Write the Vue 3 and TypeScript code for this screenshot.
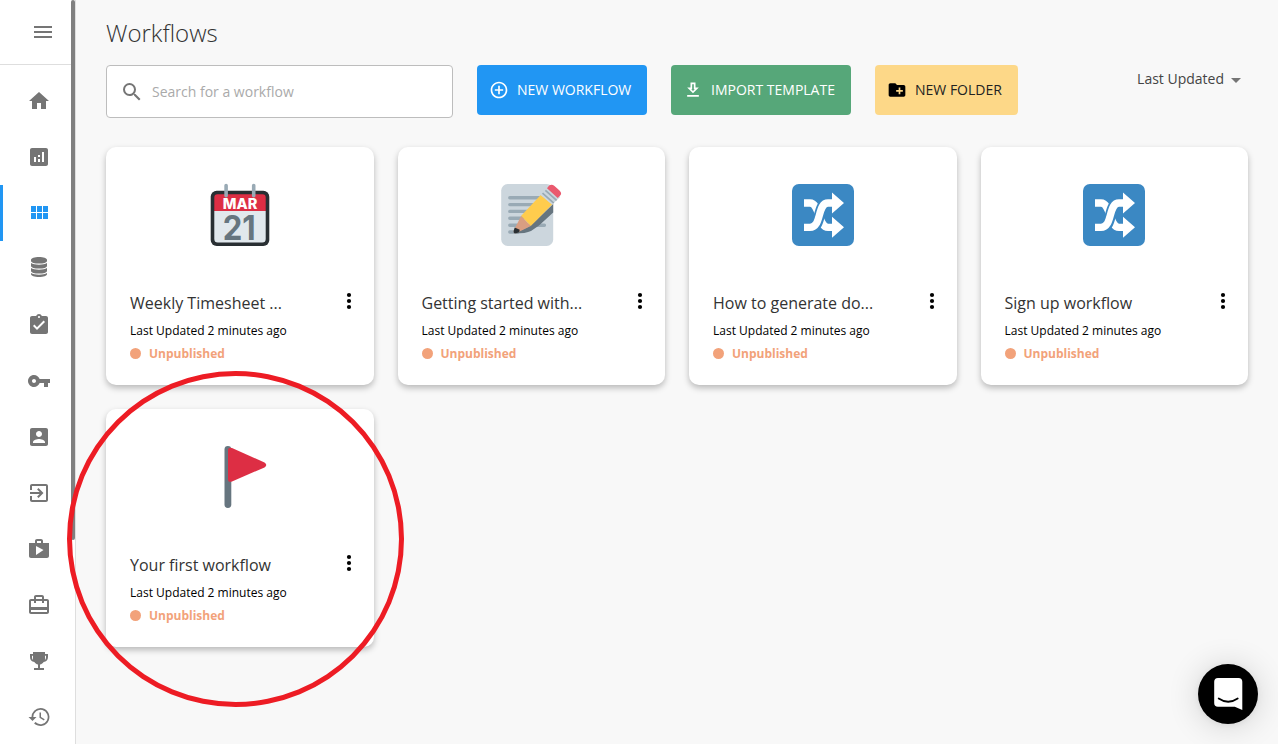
<script setup lang="ts">
interface NavItem { name: string; path: string; active?: boolean }
interface Workflow { title: string; icon: 'calendar' | 'memo' | 'shuffle' | 'flag' }

const navItems: NavItem[] = [
  { name: 'Home', path: 'M10 20v-6h4v6h5v-8h3L12 3 2 12h3v8z' },
  { name: 'Analytics', path: 'M19 3H5c-1.1 0-2 .9-2 2v14c0 1.1.9 2 2 2h14c1.1 0 2-.9 2-2V5c0-1.1-.9-2-2-2zM9 17H7v-5h2v5zm4 0h-2v-3h2v3zm0-5h-2v-2h2v2zm4 5h-2V7h2v10z' },
  { name: 'Workflows', active: true, path: 'M4 11h5V5H4v6zm0 7h5v-6H4v6zm6 0h5v-6h-5v6zm6 0h5v-6h-5v6zm-6-7h5V5h-5v6zm6-6v6h5V5h-5z' },
  { name: 'Data', path: 'M4 2.800C4 1.200 7.600 0 12 0s8 1.200 8 2.800v1.100c0 1.500-3.600 2.700-8 2.700S4 5.400 4 3.900zM4 6c1.700 1.200 4.700 1.700 8 1.700s6.300-.5 8-1.700v2.900c0 1.500-3.600 2.700-8 2.700s-8-1.200-8-2.700zM4 11c1.700 1.200 4.700 1.700 8 1.700s6.300-.5 8-1.700v2.900c0 1.500-3.600 2.700-8 2.700s-8-1.200-8-2.700zM4 16c1.700 1.200 4.700 1.700 8 1.700s6.300-.5 8-1.700v1.300c0 1.500-3.600 2.700-8 2.700s-8-1.200-8-2.700z' },
  { name: 'Tasks', path: 'M19 3h-4.180C14.400 1.840 13.300 1 12 1c-1.300 0-2.400.84-2.820 2H5c-1.100 0-2 .9-2 2v14c0 1.100.9 2 2 2h14c1.100 0 2-.9 2-2V5c0-1.100-.9-2-2-2zm-7 0c.55 0 1 .45 1 1s-.45 1-1 1-1-.45-1-1 .45-1 1-1zm-2 14l-4-4 1.410-1.410L10 14.170l6.590-6.590L18 9l-8 8z' },
  { name: 'Keys', path: 'M12.650 10C11.830 7.670 9.610 6 7 6c-3.310 0-6 2.690-6 6s2.690 6 6 6c2.610 0 4.830-1.670 5.650-4H17v4h4v-4h2v-4H12.650zM7 14c-1.100 0-2-.9-2-2s.9-2 2-2 2 .9 2 2-.9 2-2 2z' },
  { name: 'Accounts', path: 'M3 5v14c0 1.100.89 2 2 2h14c1.100 0 2-.9 2-2V5c0-1.100-.9-2-2-2H5c-1.110 0-2 .9-2 2zm12 4c0 1.660-1.340 3-3 3s-3-1.340-3-3 1.340-3 3-3 3 1.340 3 3zm-9 8c0-2 4-3.100 6-3.100s6 1.100 6 3.100v1H6v-1z' },
  { name: 'Portal', path: 'M10.090 15.590L11.500 17l5-5-5-5-1.410 1.410L12.670 11H3v2h9.670l-2.580 2.590zM19 3H5c-1.110 0-2 .9-2 2v4h2V5h14v14H5v-4H3v4c0 1.100.89 2 2 2h14c1.100 0 2-.9 2-2V5c0-1.100-.9-2-2-2z' },
  { name: 'Templates', path: 'M16 6V4c0-1.110-.89-2-2-2h-4c-1.110 0-2 .89-2 2v2H2v13c0 1.110.89 2 2 2h16c1.110 0 2-.89 2-2V6h-6zm-6-2h4v2h-4V4zM9 18V9l7.500 4L9 18z' },
  { name: 'Assets', path: 'M20 6h-3V4c0-1.110-.89-2-2-2H9c-1.110 0-2 .89-2 2v2H4c-1.110 0-2 .89-2 2v11c0 1.110.89 2 2 2h16c1.110 0 2-.89 2-2V8c0-1.110-.89-2-2-2zM9 4h6v2H9V4zm11 15H4v-2h16v2zm0-5H4V8h3v2h2V8h6v2h2V8h3v6z' },
  { name: 'Awards', path: 'M18 5V3H6v2H3v3c0 2.800 1.700 4.700 4.400 5 .8 1.300 2 2.200 3.600 2.500V19H7v2h10v-2h-4v-3.500c1.600-.3 2.800-1.200 3.600-2.500 2.700-.3 4.400-2.200 4.400-5V5zM5 8V6.700h1V10c0 .4 0 .7.1 1C5.400 10.400 5 9.500 5 8zm14 0c0 1.500-.4 2.400-1.100 3 .1-.3.1-.6.1-1V6.700h1z' },
  { name: 'History', path: 'M13.500 3a9 9 0 0 0-9 9H1.500l4 4 4-4H6.300a7.200 7.200 0 1 1 2.100 5.100L7.100 18.400A9 9 0 1 0 13.500 3zm-1 4.500v5.300l4.400 2.600.8-1.200-3.700-2.200V7.500z' },
]

const workflows: Workflow[] = [
  { title: 'Weekly Timesheet ...', icon: 'calendar' },
  { title: 'Getting started with...', icon: 'memo' },
  { title: 'How to generate do...', icon: 'shuffle' },
  { title: 'Sign up workflow', icon: 'shuffle' },
  { title: 'Your first workflow', icon: 'flag' },
]
</script>

<template>
  <div class="app">
    <aside class="sidebar">
      <div class="side-content">
        <div class="menu-toggle">
          <svg viewBox="0 0 24 24"><path d="M3 18h18v-2H3v2zm0-5h18v-2H3v2zm0-7v2h18V6H3z" /></svg>
        </div>
        <nav>
          <a v-for="item in navItems" :key="item.name" class="nav-item" :class="{ active: item.active }" :aria-label="item.name">
            <svg viewBox="0 0 24 24"><path :d="item.path" /></svg>
          </a>
        </nav>
      </div>
      <div class="scroll-thumb"></div>
    </aside>

    <main>
      <h1>Workflows</h1>
      <div class="toolbar">
        <label class="search">
          <svg viewBox="0 0 24 24"><path d="M15.500 14h-.79l-.28-.27A6.471 6.471 0 0 0 16 9.500 6.500 6.500 0 1 0 9.500 16c1.610 0 3.090-.59 4.230-1.570l.27.28v.79l5 4.990L20.490 19l-4.990-5zm-6 0C7.010 14 5 11.990 5 9.500S7.010 5 9.500 5 14 7.010 14 9.500 11.990 14 9.500 14z" /></svg>
          <span>Search for a workflow</span>
        </label>
        <button class="btn blue">
          <svg viewBox="0 0 24 24"><path d="M13 7h-2v4H7v2h4v4h2v-4h4v-2h-4V7zm-1-5C6.480 2 2 6.480 2 12s4.480 10 10 10 10-4.480 10-10S17.520 2 12 2zm0 18c-4.410 0-8-3.590-8-8s3.590-8 8-8 8 3.590 8 8-3.590 8-8 8z" /></svg>
          <span>NEW WORKFLOW</span>
        </button>
        <button class="btn green">
          <svg viewBox="0 0 24 24"><path d="M19 9h-4V3H9v6H5l7 7 7-7zm-8 2V5h2v6h1.170L12 13.170 9.830 11H11zm-6 7h14v2H5z" /></svg>
          <span>IMPORT TEMPLATE</span>
        </button>
        <button class="btn yellow">
          <svg viewBox="0 0 24 24"><path d="M20 6h-8l-2-2H4c-1.110 0-1.990.89-1.990 2L2 18c0 1.110.89 2 2 2h16c1.110 0 2-.89 2-2V8c0-1.110-.89-2-2-2zm-1 8h-3v3h-2v-3h-3v-2h3V9h2v3h3v2z" /></svg>
          <span>NEW FOLDER</span>
        </button>
        <div class="sort">
          <span>Last Updated</span>
          <svg viewBox="0 0 10 5"><path d="M0 0h10L5 5z" /></svg>
        </div>
      </div>

      <section class="grid">
        <article v-for="flow in workflows" :key="flow.title" class="card">
          <svg v-if="flow.icon === 'calendar'" class="emoji" viewBox="0 0 62 62">
            <rect x="1.700" y="6.700" width="58.600" height="55.300" rx="6" fill="#292f33" />
            <path d="M5.300 27h51.400v28a3.500 3.500 0 0 1-3.500 3.500H8.800A3.500 3.500 0 0 1 5.300 55z" fill="#e1e8ed" />
            <path d="M5.300 27V13.500a3.200 3.200 0 0 1 3.200-3.200h45a3.200 3.200 0 0 1 3.200 3.200V27z" fill="#dd2e44" />
            <path d="M17.100 1.500v10.300M44.700 1.500v10.300" stroke="#99aab5" stroke-width="3.600" stroke-linecap="round" />
            <text class="month" x="31" y="25.300" textLength="34.500" lengthAdjust="spacingAndGlyphs">MAR</text>
            <text class="day" x="30.200" y="55.600" textLength="33" lengthAdjust="spacingAndGlyphs">21</text>
          </svg>
          <svg v-else-if="flow.icon === 'memo'" class="emoji" viewBox="0 0 62 62">
            <rect x="1.200" width="52" height="62" rx="6.500" fill="#ccd6dd" />
            <path d="M9.800 13.700h30M9.800 20.600h26M9.800 27.400h20M9.800 34.300h13M9.800 41.200h34.600M9.800 48h8" stroke="#99aab5" stroke-width="3.400" stroke-linecap="round" />
            <path d="M53.200 20v8.500L39 41.500 31 47q-5 2.500-16.700 2.500l16.500-8z" fill="#66757f" />
            <path d="M21.200 31.700 13.800 46.500q-.6 3 2.200 2.800L30.800 42z" fill="#d99e82" />
            <path d="m14.700 43.500 5 2.200-.5 2.200q-2.700 1.800-4.800 1.400-1.200-.6-.7-2.500z" fill="#292f33" />
            <path d="M21.200 31.700 40.700 11l11.400 9.500L30.800 42z" fill="#ffcc4d" />
            <path d="m40.700 11 8-8.500L60.200 13l-8.100 7.500z" fill="#ccd6dd" />
            <path d="m42.500 9.200 11.300 10M45.400 6.300l11.200 10" stroke="#99aab5" stroke-width="1.700" />
            <path d="m47 4.200 2.200-2.600Q51.700-.2 54.500 2l5 4.600q3 3 .5 5.200l-2.300 2.200z" fill="#ea596e" />
          </svg>
          <svg v-else-if="flow.icon === 'shuffle'" class="emoji" viewBox="0 0 62 62">
            <rect width="62" height="62" rx="6.900" fill="#3b88c3" />
            <g fill="none" stroke-width="7.300">
              <path d="M12 19h6c10 0 8 24.300 18 24.300h5" stroke="#fff" />
              <path d="M19 43.300C30 43.300 25 19 36 19" stroke="#3b88c3" stroke-width="11" />
              <path d="M12 43.300h6C30 43.300 25 19 36 19h5" stroke="#fff" />
            </g>
            <path d="m40 8.600 12 10.500-12 10.500zM40 32.800l12 10.500-12 10.500z" fill="#fff" />
          </svg>
          <svg v-else class="emoji" viewBox="0 0 62 62">
            <path d="M18.900 3.400v55.200" stroke="#66757f" stroke-width="6.800" stroke-linecap="round" />
            <path d="M19 4.500q0-3.700 4-2.600l32.500 14.700q3.500 2.400 0 4.800L23 35.500q-4 1.200-4-2.600z" fill="#dd2e44" />
          </svg>
          <div class="title-row">
            <h2>{{ flow.title }}</h2>
            <svg class="dots" viewBox="0 0 24 24"><circle cx="12" cy="6" r="2.100" /><circle cx="12" cy="12" r="2.100" /><circle cx="12" cy="18" r="2.100" /></svg>
          </div>
          <p class="updated">Last Updated 2 minutes ago</p>
          <p class="status"><i></i><span>Unpublished</span></p>
        </article>
      </section>
    </main>

    <div class="highlight"></div>
    <button class="chat" aria-label="Chat">
      <svg viewBox="0 0 30 34">
        <path d="M4 1h20.500a3.800 3.800 0 0 1 3.800 3.800V33l-7.500-3.300H4a3.800 3.800 0 0 1-3.800-3.800V4.800A3.800 3.800 0 0 1 4 1z" fill="#fff" />
        <path d="M4.700 21.500q9.500 6.500 19 0" fill="none" stroke="#000" stroke-width="1.800" stroke-linecap="round" />
      </svg>
    </button>
  </div>
</template>

<style>
body { margin: 0; overflow: hidden; }
</style>

<style scoped>
* { box-sizing: border-box; }
.app { position: relative; display: flex; width: 1278px; height: 744px; overflow: hidden; background: #f8f8f8; font-family: "Open Sans", sans-serif; color: #333; }
h1, h2, p { margin: 0; }
button { border: 0; font-family: inherit; padding: 0; }
svg { display: block; flex: none; }
.sidebar { display: flex; align-items: flex-start; width: 76px; height: 744px; background: #fff; border-right: 1px solid #dedede; flex: none; }
.side-content { width: 71px; }
.menu-toggle { height: 65px; border-bottom: 1px solid #dedede; padding: 20px 0 0 31px; }
.menu-toggle svg, .nav-item svg { width: 24px; height: 24px; fill: #757575; }
nav { padding-top: 8px; }
.nav-item { display: flex; align-items: center; height: 56px; padding-left: 24px; border-left: 3px solid transparent; }
.nav-item.active { border-color: #2196f3; }
.nav-item.active svg { fill: #2196f3; }
.scroll-thumb { width: 4px; height: 540px; background: #808080; border-radius: 2px; }
main { flex: 1; padding: 16px 30px 0; }
h1 { height: 49px; font-size: 24px; line-height: 33px; font-weight: 300; }
.toolbar { display: flex; align-items: flex-start; gap: 24px; height: 82px; }
.search { display: flex; align-items: center; width: 347px; height: 53px; padding-left: 13px; border: 1px solid #bdbdbd; border-radius: 4px; background: #fff; }
.search svg { width: 24px; height: 24px; fill: #757575; }
.search span { margin-left: 8px; font-size: 14px; color: #aaa; }
.btn { display: flex; align-items: center; height: 50px; padding-left: 12px; border-radius: 4px; color: #fff; font-size: 14px; font-weight: 500; white-space: nowrap; }
.btn svg { width: 20px; height: 20px; margin-right: 8px; fill: currentColor; }
.btn span { padding-bottom: 2px; }
.blue { width: 170px; background: #2196f3; }
.green { width: 180px; background: #56a779; }
.yellow { width: 143px; background: #fdd888; color: #000; font-weight: 400; }
.yellow span { color: #222; }
.sort { display: flex; align-items: center; height: 28px; margin-left: auto; padding-right: 7px; font-size: 14px; color: #444; }
.sort span { padding-bottom: 2px; }
.sort svg { width: 10px; height: 5px; margin: 2px 0 0 7px; fill: #757575; }
.grid { display: grid; grid-template-columns: repeat(4, 1fr); gap: 24px; }
.card { height: 238px; padding: 37px 24px 0; background: #fff; border-radius: 10px; box-shadow: 0 3px 6px rgba(0, 0, 0, .26); }
.emoji { width: 62px; height: 62px; margin: 0 auto; overflow: visible; }
.month, .day { font-family: Inter, sans-serif; text-anchor: middle; }
.month { font-size: 14.500px; font-weight: 800; fill: #fff; }
.day { font-size: 34px; font-weight: 700; fill: #66757f; }
.title-row { display: flex; align-items: flex-start; justify-content: space-between; margin-top: 43px; height: 34px; }
h2 { margin-top: 3px; font-size: 16px; line-height: 22px; font-weight: 400; white-space: nowrap; }
.dots { width: 24px; height: 24px; margin-right: -11px; fill: #000; }
.updated { font-size: 12px; line-height: 16px; color: #000; }
.status { display: flex; align-items: center; margin-top: 7px; color: #f2a27a; font-size: 12px; line-height: 16px; font-weight: 700; }
.status i { width: 11px; height: 11px; margin: 0 8px 1px 0; border-radius: 50%; background: currentColor; }
.highlight { position: absolute; left: 67px; top: 371px; width: 337px; height: 336px; border: 5px solid #ed1c24; border-radius: 50%; }
.chat { position: absolute; display: flex; align-items: flex-start; left: 1198px; top: 664px; width: 60px; height: 60px; padding: 13px 0 0 16px; border-radius: 50%; background: #000; box-shadow: 0 1px 6px rgba(0, 0, 0, .06), 0 2px 32px rgba(0, 0, 0, .16); }
.chat svg { width: 30px; height: 34px; }
</style>
